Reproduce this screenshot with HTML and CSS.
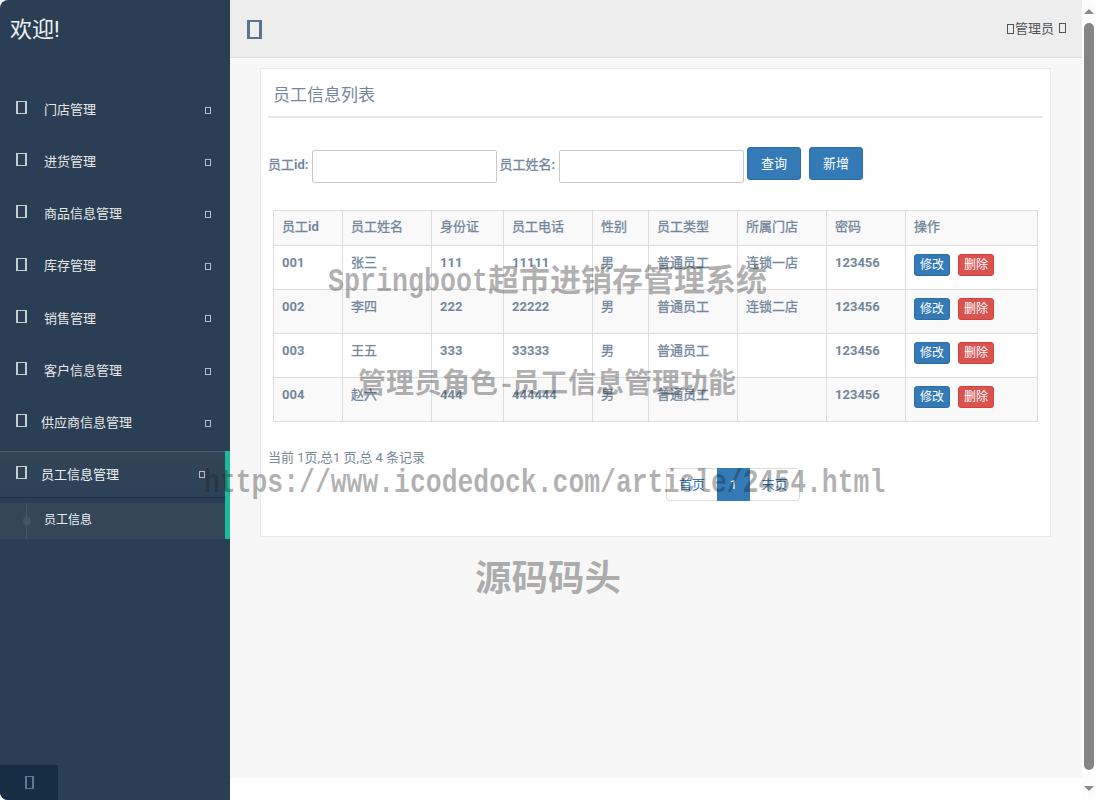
FILE: index.html
```html
<!DOCTYPE html>
<html lang="zh">
<head>
<meta charset="utf-8">
<title>员工信息</title>
<link rel="stylesheet" href="styles.css">
</head>
<body>
<div class="window">
  <aside class="sidebar">
    <div class="brand">欢迎!</div>
    <nav class="nav">
      <a class="nav-item"><i class="tofu-lg"></i><span class="nav-label">门店管理</span><i class="tofu-sm"></i></a>
      <a class="nav-item"><i class="tofu-lg"></i><span class="nav-label">进货管理</span><i class="tofu-sm"></i></a>
      <a class="nav-item"><i class="tofu-lg"></i><span class="nav-label">商品信息管理</span><i class="tofu-sm"></i></a>
      <a class="nav-item"><i class="tofu-lg"></i><span class="nav-label">库存管理</span><i class="tofu-sm"></i></a>
      <a class="nav-item"><i class="tofu-lg"></i><span class="nav-label">销售管理</span><i class="tofu-sm"></i></a>
      <a class="nav-item"><i class="tofu-lg"></i><span class="nav-label">客户信息管理</span><i class="tofu-sm"></i></a>
      <a class="nav-item nav-item-wide"><i class="tofu-lg"></i><span class="nav-label">供应商信息管理</span><i class="tofu-sm"></i></a>
      <div class="nav-group">
        <a class="nav-item nav-item-active"><i class="tofu-lg"></i><span class="nav-label">员工信息管理</span><i class="tofu-sm"></i></a>
        <a class="nav-sub"><span class="nav-sub-dot"></span><span class="nav-sub-label">员工信息</span></a>
      </div>
    </nav>
    <div class="sidebar-foot"><button class="foot-btn"><i class="tofu-foot"></i></button></div>
  </aside>
  <main class="main">
    <header class="topbar">
      <i class="tofu-toggle"></i>
      <div class="user"><i class="tofu-user"></i><span>管理员</span><i class="tofu-user tofu-user-end"></i></div>
    </header>
    <section class="content">
      <div class="card">
        <h2 class="card-title">员工信息列表</h2>
        <form class="filter">
          <label class="filter-label">员工<span class="num">id:</span></label>
          <input class="filter-input" type="text">
          <label class="filter-label">员工姓名<span class="num">:</span></label>
          <input class="filter-input" type="text">
          <button class="btn btn-primary btn-md btn-query" type="button">查询</button>
          <button class="btn btn-primary btn-md btn-next" type="button">新增</button>
        </form>
        <div class="table-wrap">
          <table class="grid">
            <colgroup>
              <col class="c1"><col class="c2"><col class="c3"><col class="c4"><col class="c5"><col class="c6"><col class="c7"><col class="c8"><col class="c9">
            </colgroup>
            <thead>
              <tr><th>员工<span class="num">id</span></th><th>员工姓名</th><th>身份证</th><th>员工电话</th><th>性别</th><th>员工类型</th><th>所属门店</th><th>密码</th><th>操作</th></tr>
            </thead>
            <tbody>
              <tr><td class="num">001</td><td>张三</td><td class="num">111</td><td class="num">11111</td><td>男</td><td>普通员工</td><td>连锁一店</td><td class="num">123456</td><td><a class="btn btn-primary btn-xs">修改</a><a class="btn btn-danger btn-xs">删除</a></td></tr>
              <tr><td class="num">002</td><td>李四</td><td class="num">222</td><td class="num">22222</td><td>男</td><td>普通员工</td><td>连锁二店</td><td class="num">123456</td><td><a class="btn btn-primary btn-xs">修改</a><a class="btn btn-danger btn-xs">删除</a></td></tr>
              <tr><td class="num">003</td><td>王五</td><td class="num">333</td><td class="num">33333</td><td>男</td><td>普通员工</td><td></td><td class="num">123456</td><td><a class="btn btn-primary btn-xs">修改</a><a class="btn btn-danger btn-xs">删除</a></td></tr>
              <tr><td class="num">004</td><td>赵六</td><td class="num">444</td><td class="num">444444</td><td>男</td><td>普通员工</td><td></td><td class="num">123456</td><td><a class="btn btn-primary btn-xs">修改</a><a class="btn btn-danger btn-xs">删除</a></td></tr>
            </tbody>
          </table>
        </div>
        <p class="status">当前 1页,总1 页,总 4 条记录</p>
        <div class="pager-row">
          <ul class="pager">
            <li class="pager-item pager-first">首页</li>
            <li class="pager-item pager-current">1</li>
            <li class="pager-item pager-last">末页</li>
          </ul>
        </div>
      </div>
    </section>
    <div class="main-foot"></div>
  </main>
  <div class="scrollbar">
    <span class="arrow arrow-up"></span>
    <span class="thumb"></span>
    <span class="arrow arrow-down"></span>
  </div>
  <div class="wm wm-1"><span class="wm-latin">Springboot</span>超市进销存管理系统</div>
  <div class="wm wm-2">管理员角色<span class="wm-dash">-</span>员工信息管理功能</div>
  <div class="wm wm-3">https://www.icodedock.com/article/2454.html</div>
  <div class="wm wm-4">源码码头</div>
</div>
</body>
</html>
```
FILE: styles.css
```css
* { box-sizing: border-box; }
html, body { margin: 0; padding: 0; height: 100%; background: #fff; overflow: hidden; }
body {
  font-family: Roboto, "Noto Sans CJK SC", sans-serif;
  font-size: 13px;
  line-height: 1.42857;
  color: #73879c;
}
i { display: block; font-style: normal; }

.window {
  position: relative;
  display: flex;
  width: 1096px;
  height: 800px;
  overflow: hidden;
  border-radius: 8px;
  background: #fff;
}

/* sidebar */
.sidebar {
  display: flex;
  flex-direction: column;
  flex: 0 0 230px;
  background: #2a3f54;
  color: #ecf0f1;
}
.brand {
  height: 84px;
  padding: 12px 0 0 10px;
  font-size: 22px;
  line-height: 36px;
  color: #ecf0f1;
}
.nav { flex: 1; }
.nav-item {
  display: flex;
  align-items: center;
  height: 52.2px;
  padding: 0 19px 0 16px;
  color: #e7e7e7;
  font-size: 13px;
}
.nav-label { flex: 1; margin-left: 17px; }
.nav-item-wide .nav-label { margin-left: 14px; }
.tofu-lg {
  width: 11px;
  height: 13px;
  margin-top: -5px;
  border: 2px solid #c5ccd2;
  border-width: 1px 2px;
}
.tofu-sm {
  width: 6px;
  height: 7px;
  border: 1px solid #b4bec6;
}
.nav-group { position: relative; margin-top: 1.6px; }
.nav-group::after {
  content: "";
  position: absolute;
  top: 0;
  right: 0;
  bottom: 0;
  width: 5px;
  background: #1abb9c;
}
.nav-item-active {
  height: 47px;
  padding-top: 1px;
  padding-right: 25px;
  border-top: 1px solid #4f5e6d;
  border-bottom: 1px solid #1f2e3e;
  background: linear-gradient(#334556, #2c4257);
  color: #ecf0f1;
}
.nav-item-active .nav-label { margin-left: 14px; }
.nav-sub {
  position: relative;
  display: flex;
  align-items: center;
  height: 36px;
  margin-top: 5px;
  padding-left: 44px;
  background: #334759;
  color: #ecf0f1;
  font-size: 12px;
}
.nav-sub-dot {
  position: absolute;
  left: 23px;
  top: 14px;
  width: 8px;
  height: 8px;
  border-radius: 50%;
  background: #425668;
}
.nav-sub-dot::before {
  content: "";
  position: absolute;
  left: 3px;
  top: -14px;
  width: 1px;
  height: 36px;
  background: #425668;
}
.sidebar-foot { height: 35px; flex: none; }
.foot-btn {
  display: flex;
  align-items: center;
  justify-content: center;
  width: 58px;
  height: 35px;
  padding: 0;
  border: 0;
  background: #172d44;
}
.tofu-foot {
  width: 9px;
  height: 13px;
  border: 1px solid #5a7a99;
  border-width: 1px 2px;
}

/* main */
.main {
  display: flex;
  flex-direction: column;
  flex: 0 0 852px;
  min-width: 0;
}
.topbar {
  display: flex;
  align-items: center;
  justify-content: space-between;
  flex: none;
  height: 58px;
  padding: 0 16px 0 17px;
  border-bottom: 1px solid #d9dee4;
  background: #ededed;
}
.tofu-toggle {
  width: 15px;
  height: 19px;
  margin-top: 2px;
  border: 2px solid #5a738e;
  border-width: 2px 3px;
}
.user {
  display: flex;
  align-items: center;
  margin-top: 1px;
  color: #515356;
  font-size: 13px;
}
.tofu-user {
  width: 7px;
  height: 10px;
  margin-right: 1px;
  border: 1px solid #515356;
}
.tofu-user-end { margin: -3px 0 0 5px; height: 10px; }
.content {
  flex: 1;
  padding: 10px 31px 0 30px;
  background: #f7f7f7;
}
.main-foot { flex: none; height: 22px; background: #fff; }

.card {
  height: 469px;
  padding: 0 7px;
  border: 1px solid #e6e9ed;
  background: #fff;
}
.card-title {
  height: 49px;
  margin: 0;
  padding: 13px 0 0 5px;
  border-bottom: 2px solid #e6e9ed;
  font-size: 17px;
  font-weight: 400;
  line-height: 26px;
  color: #73879c;
}
.filter {
  display: flex;
  align-items: flex-start;
  margin-top: 29px;
}
.filter-label {
  margin-top: 8px;
  margin-right: 4px;
  font-size: 13px;
  line-height: 19px;
  -webkit-text-stroke: 0.3px #73879c;
}
.num { font-weight: 700; -webkit-text-stroke: 0; }
.filter-input {
  width: 185px;
  height: 33px;
  margin: 3px 2px 0 0;
  padding: 0 6px;
  border: 1px solid #c8c8c8;
  border-radius: 2px;
  background: #fff;
}

.btn {
  display: inline-block;
  border: 1px solid transparent;
  border-radius: 3px;
  color: #fff;
  text-align: center;
  font-family: inherit;
  font-weight: 400;
  -webkit-text-stroke: 0;
}
.btn-primary { background: #337ab7; border-color: #2e6da4; }
.btn-danger { background: #d9534f; border-color: #d43f3a; }
.btn-md {
  width: 54px;
  height: 33px;
  padding: 0;
  font-size: 13px;
  line-height: 31px;
}
.btn-query { margin-left: 1px; }
.btn-next { margin-left: 8px; }
.btn-xs {
  width: 36px;
  height: 22px;
  margin: 0 8px 5px 0;
  font-size: 12px;
  line-height: 20px;
}

.table-wrap { margin: 27px 5px 0 5px; }
.grid {
  width: 764px;
  table-layout: fixed;
  border-collapse: collapse;
  border: 1px solid #ddd;
}
.c1 { width: 69px; }
.c2 { width: 89px; }
.c3 { width: 72px; }
.c4 { width: 89px; }
.c5 { width: 56px; }
.c6 { width: 89px; }
.c7 { width: 89px; }
.c8 { width: 79px; }
.c9 { width: 132px; }
.grid th, .grid td {
  padding: 8px;
  border: 1px solid #ddd;
  font-size: 13px;
  font-weight: 400;
  line-height: 18.57px;
  text-align: left;
  vertical-align: top;
  -webkit-text-stroke: 0.3px #73879c;
}
.grid th { padding: 7px 8px 9px; line-height: 18px; }
.grid td.num { font-weight: 700; -webkit-text-stroke: 0; }
.grid td .btn { -webkit-text-stroke: 0; }
.grid thead tr, .grid tbody tr:nth-child(even) { background: #f9f9f9; }

.status { margin: 26px 0 0; font-size: 13px; line-height: 19px; color: #7a8794; }
.pager-row { display: flex; justify-content: flex-end; margin: 1px 243px 0 0; }
.pager {
  display: flex;
  margin: 0;
  padding: 0;
  list-style: none;
}
.pager-item {
  height: 33px;
  border: 1px solid #ddd;
  background: #fff;
  color: #337ab7;
  line-height: 31px;
  text-align: center;
}
.pager-first { width: 51px; border-right: 0; border-radius: 4px 0 0 4px; }
.pager-current { width: 33px; border-color: #337ab7; background: #337ab7; color: #fff; }
.pager-last { width: 50px; border-left: 0; border-radius: 0 4px 4px 0; }

/* scrollbar */
.scrollbar {
  position: relative;
  flex: 0 0 14px;
  background: #fdfdfd;
}
.thumb {
  position: absolute;
  left: 2px;
  top: 23px;
  width: 10px;
  height: 747px;
  border-radius: 5px;
  background: #858585;
}
.arrow {
  position: absolute;
  left: 2px;
  width: 0;
  height: 0;
  border-left: 5px solid transparent;
  border-right: 5px solid transparent;
}
.arrow-up { top: 9px; border-bottom: 5px solid #8a8a8a; }
.arrow-down { bottom: 9px; border-top: 5px solid #8a8a8a; }

/* watermark */
.wm {
  position: absolute;
  white-space: nowrap;
  pointer-events: none;
  color: rgba(30, 30, 30, 0.35);
  font-family: "Liberation Mono", "Noto Sans CJK SC", monospace;
  font-weight: 700;
}
.wm-1 { left: 328px; top: 261px; font-size: 31px; line-height: 44px; }
.wm-latin {
  display: inline-block;
  width: 160px;
  font-size: 33px;
  transform: scaleX(0.808);
  transform-origin: 0 50%;
}
.wm-2 { left: 358px; top: 364px; font-size: 28px; line-height: 44px; }
.wm-dash { letter-spacing: -2.8px; }
.wm-3 {
  left: 204px;
  top: 462px;
  font-size: 33px;
  line-height: 44px;
  transform: scaleX(0.8);
  transform-origin: 0 50%;
}
.wm-4 { left: 475px; top: 558px; font-size: 36.5px; line-height: 48px; }
```
